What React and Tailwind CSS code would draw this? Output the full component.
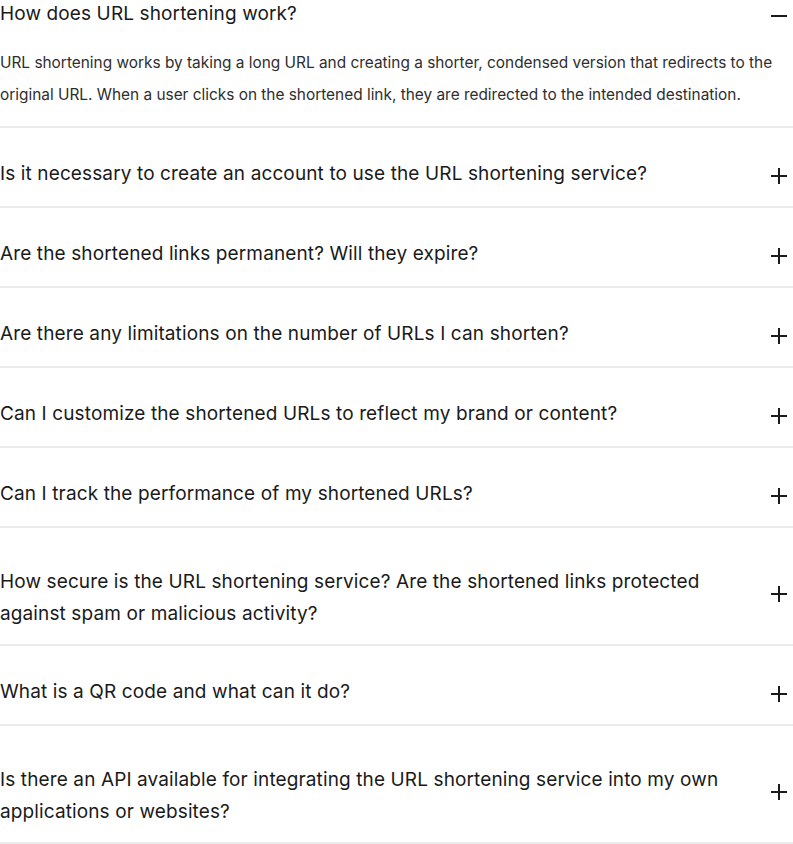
import React from "react";

const FONT = { fontFamily: "Inter, 'Noto Sans', sans-serif" };

function PlusIcon() {
  return (
    <svg width="18" height="18" viewBox="0 0 18 18" fill="none" stroke="#1a1a1a" strokeWidth="2" strokeLinecap="butt">
      <line x1="9" y1="1" x2="9" y2="17" />
      <line x1="1" y1="9" x2="17" y2="9" />
    </svg>
  );
}

function MinusIcon() {
  return (
    <svg width="18" height="18" viewBox="0 0 18 18" fill="none" stroke="#1a1a1a" strokeWidth="2" strokeLinecap="butt">
      <line x1="1" y1="9" x2="17" y2="9" />
    </svg>
  );
}

const items = [
  { lines: ["Is it necessary to create an account to use the URL shortening service?"] },
  { lines: ["Are the shortened links permanent? Will they expire?"] },
  { lines: ["Are there any limitations on the number of URLs I can shorten?"] },
  { lines: ["Can I customize the shortened URLs to reflect my brand or content?"] },
  { lines: ["Can I track the performance of my shortened URLs?"] },
  {
    lines: [
      "How secure is the URL shortening service? Are the shortened links protected",
      "against spam or malicious activity?",
    ],
  },
  { lines: ["What is a QR code and what can it do?"] },
  {
    lines: [
      "Is there an API available for integrating the URL shortening service into my own",
      "applications or websites?",
    ],
  },
];

export default function App() {
  return (
    <div className="w-[793px] bg-white overflow-hidden" style={FONT}>
      <div className="mt-[-2px] border-b-2 border-[#ebebeb] pb-[15px]">
        <div className="flex items-start justify-between">
          <h3 className="text-[19px] leading-8 tracking-[0.12px] text-[#1a1a1a] font-normal">
            How does URL shortening work?
          </h3>
          <div className="mt-[9px] mr-[5px] shrink-0">
            <MinusIcon />
          </div>
        </div>
        <p className="mt-[17px] text-[15.4px] leading-8 text-[#2e2e2e] whitespace-nowrap">
          URL shortening works by taking a long URL and creating a shorter, condensed version that redirects to the
          <br />
          original URL. When a user clicks on the shortened link, they are redirected to the intended destination.
        </p>
      </div>
      {items.map((it, i) => {
        const multi = it.lines.length > 1;
        return (
          <div
            key={i}
            className={
              "flex items-start justify-between border-b-2 border-[#ebebeb] " +
              (multi ? "pt-[38px] pb-[14px]" : "pt-[30px] pb-[16px]")
            }
          >
            <h3 className="text-[19px] leading-8 tracking-[0.12px] text-[#1a1a1a] font-normal">
              {it.lines.map((l, j) => (
                <React.Fragment key={j}>
                  {j > 0 && <br />}
                  {l}
                </React.Fragment>
              ))}
            </h3>
            <div className={"mr-[5px] shrink-0 " + (multi ? "mt-[19px]" : "mt-[9px]")}>
              <PlusIcon />
            </div>
          </div>
        );
      })}
    </div>
  );
}
